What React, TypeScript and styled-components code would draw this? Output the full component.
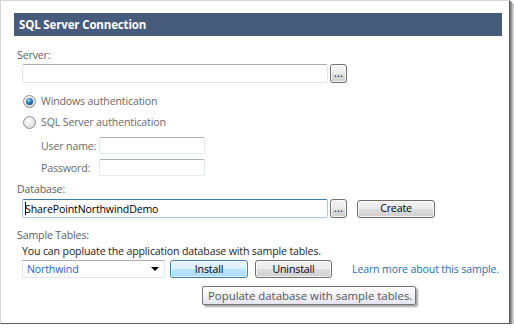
import React from "react"
import styled, { createGlobalStyle, css } from "styled-components"

const GlobalStyle = createGlobalStyle`
  html, body {
    margin: 0;
    padding: 0;
    background: #fff;
  }
  body {
    font-family: "Open Sans", "Liberation Sans", sans-serif;
    font-size: 10.6px;
    letter-spacing: -0.15px;
    color: #222;
  }
`

const Window = styled.div`
  position: relative;
  box-sizing: border-box;
  width: 510px;
  height: 324px;
  padding: 12px 7px 0 13px;
  background: #fff;
  border-top: 1px solid #d6d6d6;
  border-left: 1px solid #d6d6d6;
  border-right: 1px solid #5c5c5c;
  border-bottom: 1px solid #5c5c5c;
  box-shadow: 1px 1px 0 #7a7a7a, 2px 2px 0 #9a9a9a, 3px 3px 1px #bdbdbd,
    4px 4px 1px #dedede;
`

const Header = styled.div`
  height: 23px;
  line-height: 23px;
  padding-left: 5px;
  background: #475b7c;
  color: #fff;
  font-weight: 700;
  font-size: 11.5px;
  letter-spacing: -0.15px;
`

const Body = styled.div`
  display: flex;
  flex-direction: column;
  padding-left: 3px;
`

const Label = styled.div<{ $top?: number; $dark?: boolean }>`
  height: 16px;
  line-height: 16px;
  margin-top: ${(p) => p.$top ?? 0}px;
  color: ${(p) => (p.$dark ? "#1e1e1e" : "#5e5e5e")};
  padding-left: ${(p) => (p.$dark ? 5 : 0)}px;
  white-space: nowrap;
`

const Row = styled.div<{ $top?: number; $indent?: number }>`
  display: flex;
  align-items: center;
  margin-top: ${(p) => p.$top ?? 0}px;
  padding-left: ${(p) => p.$indent ?? 5}px;
  white-space: nowrap;
`

const TextBox = styled.div<{ $width: number; $height?: number; $focused?: boolean }>`
  box-sizing: border-box;
  flex: none;
  width: ${(p) => p.$width}px;
  height: ${(p) => p.$height ?? 19}px;
  background: #fff;
  border: 1px solid ${(p) => (p.$focused ? "#a9cbe6" : "#e2e7ee")};
  border-top-color: ${(p) => (p.$focused ? "#3d7bad" : "#abadb3")};
  border-radius: 2px;
  padding: 0 2px;
  display: flex;
  align-items: center;
  color: #000;
`

const Caret = styled.span`
  display: inline-block;
  width: 1px;
  height: 13px;
  background: #000;
  margin-right: -1px;
`

const Button = styled.button<{ $width: number; $height?: number; $hot?: boolean; $gap?: number }>`
  box-sizing: border-box;
  flex: none;
  width: ${(p) => p.$width}px;
  height: ${(p) => p.$height ?? 18}px;
  margin-left: ${(p) => p.$gap ?? 0}px;
  border: 1px solid #707070;
  border-radius: 3px;
  background: linear-gradient(#f2f2f2 0%, #ebebeb 50%, #dddddd 51%, #cfcfcf 100%);
  box-shadow: inset 0 0 0 1px rgba(255, 255, 255, 0.7);
  font-family: inherit;
  font-size: 10.6px;
  letter-spacing: -0.15px;
  color: #000;
  padding: 0;
  line-height: 1;
  display: flex;
  align-items: center;
  justify-content: center;
  ${(p) =>
    p.$hot &&
    css`
      border-color: #3c7fb1;
      background: linear-gradient(#eaf6fd 0%, #d9f0fc 50%, #bee6fd 51%, #a7d9f5 100%);
    `}
`

const BrowseButton = styled(Button)`
  align-items: flex-end;
  padding-bottom: 3px;
  letter-spacing: 0.3px;
`

const RadioRow = styled.label<{ $top: number }>`
  display: flex;
  align-items: center;
  height: 16px;
  margin-top: ${(p) => p.$top}px;
  padding-left: 6px;
  color: #6a6a6a;
  gap: 5px;
`

const RadioDot = styled.span<{ $checked?: boolean }>`
  box-sizing: border-box;
  width: 13px;
  height: 13px;
  border-radius: 50%;
  border: 1px solid #8e8f8f;
  background: radial-gradient(circle at 40% 35%, #ffffff 0%, #e9e9e9 45%, #cfcfcf 100%);
  position: relative;
  ${(p) =>
    p.$checked &&
    css`
      &::after {
        content: "";
        position: absolute;
        left: 2px;
        top: 2px;
        width: 7px;
        height: 7px;
        border-radius: 50%;
        background: radial-gradient(circle at 40% 35%, #9fdcf5 0%, #1f77b8 45%, #0a3a6e 100%);
      }
    `}
`

const FieldLabel = styled.span`
  flex: none;
  width: 58px;
  color: #6a6a6a;
`

const Select = styled.div`
  box-sizing: border-box;
  flex: none;
  width: 143px;
  height: 18px;
  border: 1px solid #e2e7ee;
  border-top-color: #abadb3;
  display: flex;
  align-items: center;
  justify-content: space-between;
  padding: 0 4px;
  color: #1f5fd0;
`

const Arrow = styled.span`
  width: 0;
  height: 0;
  border-left: 4px solid transparent;
  border-right: 4px solid transparent;
  border-top: 4px solid #000;
  margin-right: 1px;
`

const InstallWrap = styled.div`
  position: relative;
  margin-left: 5px;
`

const Tooltip = styled.div`
  position: absolute;
  left: 32px;
  top: 26px;
  box-sizing: border-box;
  width: 214px;
  height: 19px;
  line-height: 17px;
  padding-left: 5px;
  border: 1px solid #767676;
  border-radius: 2px;
  background: linear-gradient(#ffffff, #e4e5f0);
  color: #575757;
  font-size: 11.4px;
  letter-spacing: 0;
  white-space: nowrap;
  box-shadow: 2px 2px 2px rgba(0, 0, 0, 0.35);
`

const LinkText = styled.a`
  margin-left: 20px;
  color: #1f6fb2;
  text-decoration: none;
`

export default function App() {
  return (
    <>
      <GlobalStyle />
      <Window>
        <Header>SQL Server Connection</Header>
        <Body>
          <Label $top={11}>Server:</Label>
          <Row $top={1}>
            <TextBox $width={306} />
            <BrowseButton $width={17} $height={19} $gap={2}>...</BrowseButton>
          </Row>

          <RadioRow $top={10}>
            <RadioDot $checked />
            Windows authentication
          </RadioRow>
          <RadioRow $top={5}>
            <RadioDot />
            SQL Server authentication
          </RadioRow>

          <Row $top={7} $indent={24}>
            <FieldLabel>User name:</FieldLabel>
            <TextBox $width={106} $height={17} />
          </Row>
          <Row $top={5} $indent={24}>
            <FieldLabel>Password:</FieldLabel>
            <TextBox $width={106} $height={17} />
          </Row>

          <Label $top={5}>Database:</Label>
          <Row $top={2}>
            <TextBox $width={306} $focused>
              <Caret />
              SharePointNorthwindDemo
            </TextBox>
            <BrowseButton $width={17} $height={19} $gap={2}>...</BrowseButton>
            <Button $width={78} $gap={10}>Create</Button>
          </Row>

          <Label $top={9}>Sample Tables:</Label>
          <Label $dark>You can popluate the application database with sample tables.</Label>
          <Row $top={1}>
            <Select>
              Northwind
              <Arrow />
            </Select>
            <InstallWrap>
              <Button $width={78} $hot>Install</Button>
              <Tooltip>Populate database with sample tables.</Tooltip>
            </InstallWrap>
            <Button $width={77} $gap={7}>Uninstall</Button>
            <LinkText href="#">Learn more about this sample.</LinkText>
          </Row>
        </Body>
      </Window>
    </>
  )
}
